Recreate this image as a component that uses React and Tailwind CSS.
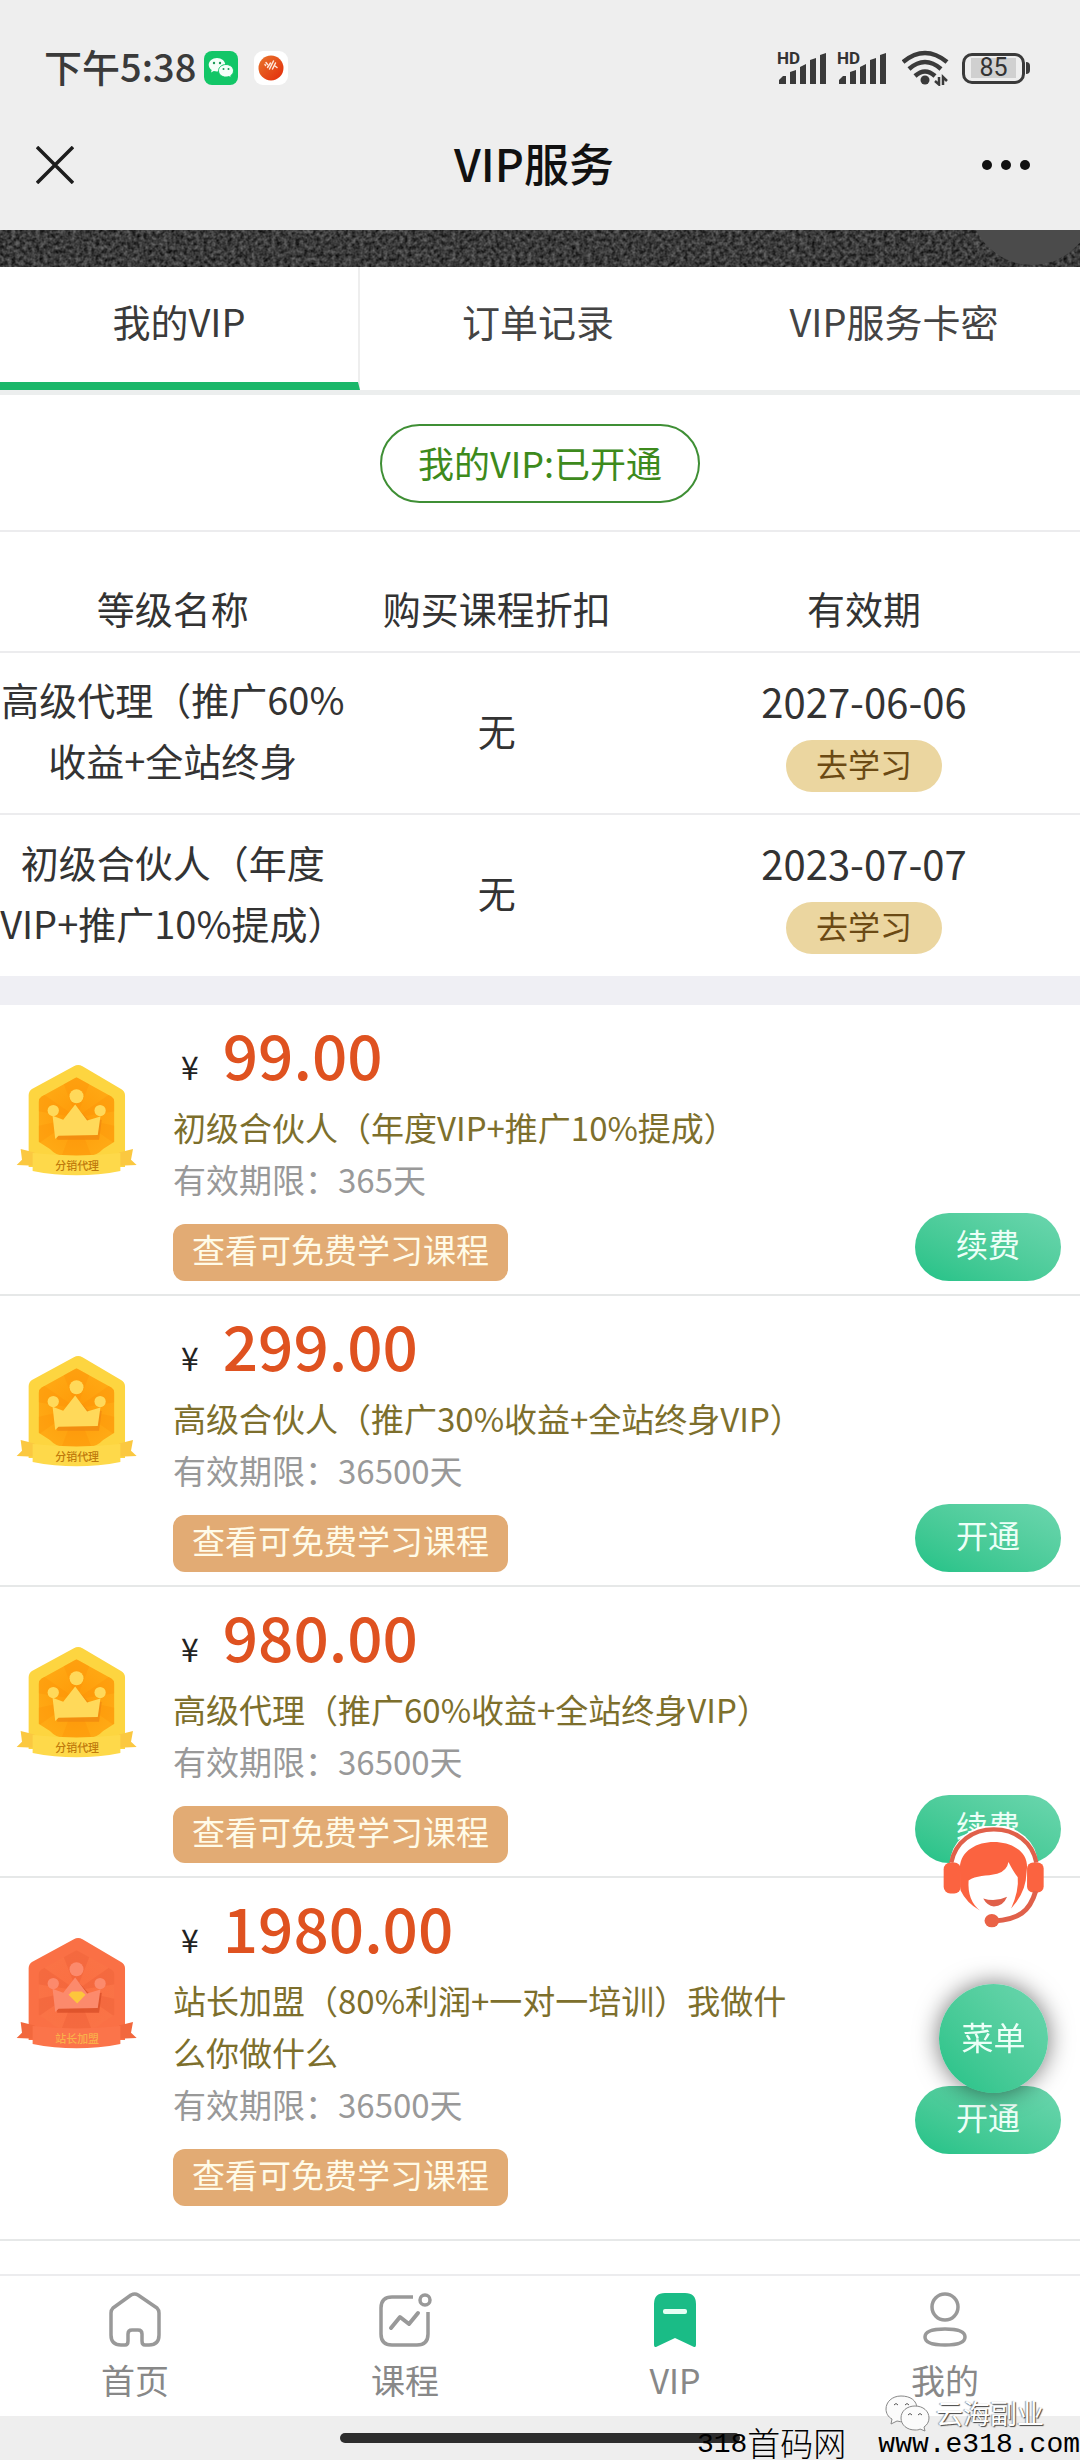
import React from "react";

const plans = [
  { price: "99.00", name: "初级合伙人（年度VIP+推广10%提成）", days: "365天", action: "续费", badge: "gold" },
  { price: "299.00", name: "高级合伙人（推广30%收益+全站终身VIP）", days: "36500天", action: "开通", badge: "gold" },
  { price: "980.00", name: "高级代理（推广60%收益+全站终身VIP）", days: "36500天", action: "续费", badge: "gold" },
  { price: "1980.00", name: "站长加盟（80%利润+一对一培训）我做什么你做什么", days: "36500天", action: "开通", badge: "red" },
];

const memberships = [
  { name: "高级代理（推广60%收益+全站终身", discount: "无", date: "2027-06-06" },
  { name: "初级合伙人（年度VIP+推广10%提成）", discount: "无", date: "2023-07-07" },
];

function WeChatIcon() {
  return (
    <svg viewBox="0 0 34 34" className="h-[34px] w-[34px]" aria-label="微信">
      <rect width="34" height="34" rx="8" fill="#12c667" />
      <path d="M13 7c-4.600 0-8.300 3-8.300 6.800 0 2.100 1.200 4 3 5.300l-.7 2.400 2.800-1.400c1 .3 2.100.4 3.200.4 4.600 0 8.300-3 8.300-6.700S17.600 7 13 7z" fill="#f4fff9" />
      <path d="M22 13.500c-4.200 0-7.500 2.800-7.500 6.300s3.300 6.300 7.500 6.300c1 0 2-.2 2.900-.5l2.500 1.300-.7-2.200c1.700-1.100 2.800-2.900 2.800-4.900 0-3.500-3.300-6.300-7.500-6.300z" fill="#f4fff9" stroke="#12c667" strokeWidth="1" />
      <g fill="#1a9a58">
        <circle cx="10" cy="12" r="1.200" />
        <circle cx="16" cy="12" r="1.200" />
        <circle cx="19.500" cy="18" r="1" />
        <circle cx="24.500" cy="18" r="1" />
      </g>
    </svg>
  );
}

function RedAppIcon() {
  return (
    <svg viewBox="0 0 34 34" className="h-[34px] w-[34px]" aria-hidden="true">
      <defs>
        <linearGradient id="ball" x1="0" y1="0" x2="1" y2="1">
          <stop offset="0" stopColor="#e8762c" />
          <stop offset="1" stopColor="#e32a0a" />
        </linearGradient>
      </defs>
      <rect width="34" height="34" rx="9" fill="#fff" />
      <circle cx="17" cy="17" r="12.500" fill="url(#ball)" />
      <g stroke="#ffe6d8" strokeWidth="1.500" strokeLinecap="round">
        <path d="M12 11.500l1.500 2M13.500 16.500l3-4.500M15.500 18l4-8M18.500 18l3-6M21 15l2 1.500M11 13.500l.5 1" />
      </g>
    </svg>
  );
}

function SignalIcon() {
  return (
    <svg viewBox="0 0 52 36" className="h-9 w-[52px] overflow-visible" aria-label="信号">
      <text x="-1" y="14" fontSize="17" fontWeight="700" fill="#333" fontFamily="Roboto, sans-serif">HD</text>
      <g fill="#3a3a3a">
        <path d="M1 34v-4l4-4 3 0v8z" />
        <path d="M12 34V22l6-2v14z" />
        <path d="M22 34V17l6-3v20z" />
        <path d="M32 34V10l6-2v26z" />
        <path d="M42 34V5l6-2v31z" />
      </g>
    </svg>
  );
}

function WifiIcon() {
  return (
    <svg viewBox="0 0 48 36" className="h-9 w-12" aria-label="无线网络">
      <g fill="none" stroke="#3a3a3a" strokeWidth="4.500">
        <path d="M1 12Q23-6 45 12" />
        <path d="M7 19Q23 5 39 19" />
        <path d="M13 26Q23 17 33 26" />
      </g>
      <circle cx="23" cy="30" r="4.500" fill="#3a3a3a" />
      <path d="M33 31l4 3.500V27M41 35v-8l4 4" fill="none" stroke="#3a3a3a" strokeWidth="2.500" />
    </svg>
  );
}

function Badge({ kind }) {
  const gold = kind === "gold";
  const id = gold ? "gold" : "red";
  const rim = gold ? "#fdd540" : "#fa7045";
  const crown = gold ? "#ffd95a" : "#fc8a6c";
  const shade = gold ? "#f08a10" : "#d94f28";
  return (
    <svg viewBox="45 40 370 340" className="h-[113px] w-[123px]" role="img" aria-label={gold ? "分销代理" : "站长加盟"}>
      <defs>
        <radialGradient id={id}>
          <stop offset="0" stopColor={gold ? "#ff9a08" : "#fb6f42"} />
          <stop offset="1" stopColor={gold ? "#ffa914" : "#fa7346"} />
        </radialGradient>
        <clipPath id={id + "clip"}>
          <path d="M230 80L335 138Q344 144 344 154V274L310 296Q290 318 262 318H198Q170 318 150 296L116 274V154Q116 144 125 138Z" />
        </clipPath>
      </defs>
      <path d="M86 134Q86 122 96 115L222 47Q235 39 248 47L364 115Q376 122 376 134V350H86Z" fill={rim} />
      <path d="M62 296L104 306V346L50 344L66 328ZM400 296L358 306V346L411 344L394 328Z" fill={gold ? "#fbc840" : "#f2683d"} />
      <g clipPath={`url(#${id}clip)`}>
        <rect x="110" y="75" width="240" height="250" fill={`url(#${id})`} />
        <g fill={gold ? "#fb8f06" : "#ee5f38"} opacity={gold ? ".3" : ".45"}>
          <path d="M230 200L180 70H280ZM230 200L360 110V180ZM230 200L360 230V290ZM230 200L280 330H180ZM230 200L100 290V230ZM230 200L100 180V110Z" />
        </g>
      </g>
      <path d="M166 205L194 212L236 176L270 212L306 208L298 268H172Z" fill={shade} opacity=".8" />
      <path d="M158 196L190 208L226 162L262 210L302 198L294 254L176 256L166 266Z" fill={crown} />
      <circle cx="230" cy="137" r="21" fill={crown} />
      <circle cx="160" cy="180" r="17" fill={crown} />
      <circle cx="301" cy="180" r="17" fill={crown} />
      {!gold && <path d="M206 214L216 204H246L257 214L232 240Z" fill="#fdc63c" />}
      <path d="M98 308Q230 322 362 308V362Q230 388 98 362Z" fill={gold ? "#fed94a" : "#fb744a"} />
      <text x="232" y="359" textAnchor="middle" fontSize="33" fontWeight="500" fill={gold ? "#c07a0c" : "#f9b04a"}>
        {gold ? "分销代理" : "站长加盟"}
      </text>
    </svg>
  );
}

function ServiceIcon() {
  return (
    <svg viewBox="66 76 310 310" className="h-[103px] w-[103px]" aria-hidden="true">
      <path d="M90 190A132 118 0 0 1 354 190L350 250Q330 330 240 362H200L120 290Z" fill="#fff" />
      <path d="M94 186C106 124 158 86 222 86S338 124 350 186" fill="none" stroke="#e0604a" strokeWidth="13" />
      <path d="M120 200C122 150 172 124 222 124S324 150 322 200L318 240Q310 285 274 324Q298 270 294 230Q282 215 266 184Q262 210 232 220C200 228 168 224 146 240Q142 300 180 330Q140 308 122 270Z" fill="#fb6340" />
      <rect x="71" y="186" width="52" height="93" rx="20" fill="#fb6340" />
      <rect x="322" y="186" width="50" height="90" rx="18" fill="#fb6340" />
      <path d="M190 294Q226 306 262 289Q250 318 222 318Q202 316 190 294Z" fill="#e0604a" />
      <path d="M348 272C330 334 296 358 222 362" fill="none" stroke="#e0604a" strokeWidth="15" />
      <ellipse cx="216" cy="361" rx="22" ry="20" fill="#ea6246" />
    </svg>
  );
}

function HomeIcon() {
  return (
    <svg viewBox="0 0 56 56" className="h-14 w-14" fill="none" stroke="#999" strokeWidth="3.500" strokeLinejoin="round" aria-hidden="true">
      <path d="M4 21Q4 18 6 16L24 3Q28 1 31 3L50 16Q52 18 52 21V43Q52 53 42 53H38Q35 53 35 49V42Q35 38 31 38H25Q21 38 21 42V49Q21 53 18 53H14Q4 53 4 43Z" />
    </svg>
  );
}

function CourseIcon() {
  return (
    <svg viewBox="0 0 56 56" className="h-14 w-14" fill="none" stroke="#999" strokeWidth="3.500" aria-hidden="true">
      <path d="M36 5H15Q4 5 4 16V42Q4 53 15 53H40Q51 53 51 42V20" />
      <circle cx="48" cy="8" r="5" />
      <path d="M14 36L23 25L32 32L41 21" strokeWidth="4" strokeLinecap="round" strokeLinejoin="round" />
    </svg>
  );
}

function VipIcon() {
  return (
    <svg viewBox="0 0 56 56" className="h-14 w-14" aria-hidden="true">
      <path d="M7 12Q7 1 18 1H38Q49 1 49 12V53Q49 56 46 54.500L28 46L10 54.500Q7 56 7 53Z" fill="#1abc86" />
      <rect x="16" y="17" width="24" height="5" rx="2" fill="#e6fff5" />
    </svg>
  );
}

function MineIcon() {
  return (
    <svg viewBox="0 0 56 56" className="h-14 w-14" fill="none" stroke="#999" strokeWidth="3.500" aria-hidden="true">
      <circle cx="28" cy="15" r="13" />
      <path d="M8 45C8 40 14 37 28 37S48 40 48 45S42 53 28 53S8 50 8 45Z" />
    </svg>
  );
}

const navItems = [
  { label: "首页", Icon: HomeIcon },
  { label: "课程", Icon: CourseIcon },
  { label: "VIP", Icon: VipIcon },
  { label: "我的", Icon: MineIcon },
];

function StatusBar() {
  return (
    <div className="flex h-[100px] items-center justify-between pt-9 pr-[50px] pl-[44px]">
      <div className="flex items-center">
        <span className="pb-1 text-[38px] leading-[52px] font-medium text-[#3a3a3a]">下午5:38</span>
        <span className="ml-2 flex gap-4">
          <WeChatIcon />
          <RedAppIcon />
        </span>
      </div>
      <div className="flex items-center">
        <span className="flex gap-2">
          <SignalIcon />
          <SignalIcon />
        </span>
        <span className="mr-3 ml-3">
          <WifiIcon />
        </span>
        <span className="flex h-[31px] w-[63px] items-center justify-center rounded-[10px] border-3 border-[#3a3a3a]">
          <span className="bg-[#d0d0d0] px-2 font-[Roboto] text-[25px] leading-[20px] text-[#333]">85</span>
        </span>
        <span className="ml-px h-3 w-1 rounded-r bg-[#3a3a3a]" />
      </div>
    </div>
  );
}

function TitleBar() {
  return (
    <div className="flex h-[130px] items-center justify-between px-9">
      <button type="button" aria-label="关闭" className="w-[60px]">
        <svg viewBox="0 0 38 38" className="h-[38px] w-[38px]" stroke="#1d1d1d" strokeWidth="3.500">
          <path d="M1 1L37 37M37 1L1 37" />
        </svg>
      </button>
      <h1 className="pr-3 pb-1 text-[45px] font-medium text-[#111]">VIP服务</h1>
      <button type="button" aria-label="更多" className="flex w-[60px] items-center justify-end gap-[9px] pr-3.5">
        <span className="h-2.5 w-2.5 shrink-0 rounded-full bg-[#111]" />
        <span className="h-2.5 w-2.5 shrink-0 rounded-full bg-[#111]" />
        <span className="h-2.5 w-2.5 shrink-0 rounded-full bg-[#111]" />
      </button>
    </div>
  );
}

function Banner() {
  return (
    <div className="relative h-[37px] overflow-hidden bg-[#2e2e2e]">
      <svg className="h-full w-full" aria-hidden="true">
        <filter id="grain" x="0" y="0" width="100%" height="100%" colorInterpolationFilters="sRGB">
          <feTurbulence type="fractalNoise" baseFrequency="0.25" numOctaves="3" seed="4" />
          <feColorMatrix values="0.5 0 0 0 -0.02  0.5 0 0 0 -0.02  0.5 0 0 0 -0.02  0 0 0 0 1" />
        </filter>
        <rect width="100%" height="100%" filter="url(#grain)" />
      </svg>
      <div className="absolute -right-3.5 bottom-0.5 h-[124px] w-[124px] rounded-full bg-[#4b4b4b]" />
    </div>
  );
}

function Tabs() {
  return (
    <div role="tablist" className="grid grid-cols-3 border-b-[5px] border-[#eceeee] text-[38px] leading-[56px] text-[#444]">
      <button type="button" role="tab" aria-selected="true" className="-mb-px h-[123px] border-r-2 border-b-8 border-[#eee] border-b-[#1bb76a] pb-2 text-[#3a3a3a]">
        我的VIP
      </button>
      <button type="button" role="tab" aria-selected="false" className="h-[123px] pr-1 pb-4">订单记录</button>
      <button type="button" role="tab" aria-selected="false" className="h-[123px] pr-6 pb-4 pl-3">VIP服务卡密</button>
    </div>
  );
}

function MembershipTable() {
  return (
    <table className="w-full table-fixed text-center text-[38px] text-[#333]">
      <colgroup>
        <col className="w-[32%]" />
        <col className="w-[28%]" />
        <col className="w-[40%]" />
      </colgroup>
      <thead>
        <tr className="h-[121px] border-t-2 border-[#ececee]">
          <th className="pt-8 leading-[56px] font-normal">等级名称</th>
          <th className="pt-8 leading-[56px] font-normal">购买课程折扣</th>
          <th className="pt-8 leading-[56px] font-normal">有效期</th>
        </tr>
      </thead>
      <tbody>
        {memberships.map((m) => (
          <tr key={m.date} className="h-[162px] border-t-2 border-[#ececee]">
            <td className="pb-2 leading-[61px]">{m.name}</td>
            <td className="pb-2 leading-[61px]">{m.discount}</td>
            <td>
              <div className="pb-2 text-[40px] leading-[53px]">{m.date}</div>
              <button type="button" className="mx-auto mt-1 block h-[52px] w-[156px] rounded-full bg-[#ebd6a0] pb-1.5 text-[32px] leading-[46px] text-[#6b4a14]">
                去学习
              </button>
            </td>
          </tr>
        ))}
      </tbody>
    </table>
  );
}

function Plan({ plan }) {
  return (
    <li className="flex items-start border-b-2 border-[#e6e8e8] pr-[19px] pb-[13px] pl-[15px] last:pb-[33px]">
      <div className="mt-[59px] w-[158px] shrink-0">
        <Badge kind={plan.badge} />
      </div>
      <div className="min-w-0 flex-1 pr-[108px]">
        <p className="flex items-baseline gap-6 pl-2 text-[#222]">
          <span className="text-[32px] leading-[40px]">¥</span>
          <span className="text-[62px] leading-[96px] font-medium text-[#df5220]">{plan.price}</span>
        </p>
        <h2 className="text-[33px] leading-[52px] text-[#7d6f2c]">{plan.name}</h2>
        <p className="text-[33px] leading-[52px] text-[#999]">有效期限：{plan.days}</p>
        <button type="button" className="mt-[19px] block h-[57px] rounded-xl bg-[#e2ab74] px-[19px] pb-1.5 text-[33px] leading-[51px] text-[#fffbe8]">
          查看可免费学习课程
        </button>
      </div>
      <button type="button" className="mt-[208px] h-[68px] w-[146px] shrink-0 rounded-full bg-linear-to-tr from-[#20c287] to-[#6bd6ae] pb-2 text-[32px] leading-[60px] text-[#ecfff7]">
        {plan.action}
      </button>
    </li>
  );
}

function FloatingActions() {
  return (
    <div className="fixed right-8 bottom-[367px] flex flex-col items-center gap-[55px]">
      <button type="button" aria-label="在线客服">
        <ServiceIcon />
      </button>
      <button type="button" className="h-[109px] w-[109px] rounded-full bg-linear-to-tr from-[#20c287] to-[#6bd6ae] pb-1.5 text-[32px] text-[#ecfff7] shadow-[0_0_24px_rgba(0,0,0,0.55)]">
        菜单
      </button>
    </div>
  );
}

function BottomNav() {
  return (
    <nav className="grid h-[142px] grid-cols-4 border-t-2 border-[#ececee] bg-white">
      {navItems.map(({ label, Icon }) => (
        <a key={label} href="#" className="flex flex-col items-center pt-4 text-[34px] leading-[52px] text-[#888]">
          <Icon />
          <span className="mt-1.5">{label}</span>
        </a>
      ))}
    </nav>
  );
}

function Watermark() {
  return (
    <div className="pointer-events-none absolute right-0 bottom-0 flex flex-col items-end">
      <div className="mr-9 -mb-2 flex items-center gap-1.5">
        <svg viewBox="0 0 46 38" className="h-[38px] w-[46px]" fill="#fbfbfb" stroke="#888" strokeWidth="1" aria-hidden="true">
          <path d="M17 2C8 2 2 8 2 15c0 4 2 8 6 10l-1 5 6-3c10 3 20-3 20-12S26 2 17 2z" />
          <path d="M31 12c-8 0-14 5-14 12s6 12 14 12c2 0 4 0 5-1l5 2-1-4c3-2 5-5 5-9 0-7-6-12-14-12z" />
          <path d="M10 11q2-3 4 0M21 11q2-3 4 0M24 21q2-3 4 0M34 21q2-3 4 0" fill="none" stroke="#555" />
        </svg>
        <span className="text-[27px] leading-[38px] text-white [text-shadow:1px_1px_1px_#444,-1px_0_1px_#999]">云海副业</span>
      </div>
      <div className="flex items-end gap-8 font-['Liberation_Mono','Noto_Sans_CJK_SC',monospace] text-[28px] leading-[30px] text-black">
        <span className="flex items-end">
          318<span className="font-['Noto_Sans_CJK_SC',sans-serif] text-[33px] leading-[36px] font-light">首码网</span>
        </span>
        <span>www.e318.com</span>
      </div>
    </div>
  );
}

export default function App() {
  return (
    <div className="relative flex min-h-screen flex-col bg-[#eeeeee] font-['Noto_Sans_CJK_SC',sans-serif]">
      <header>
        <StatusBar />
        <TitleBar />
        <Banner />
      </header>
      <main className="grow bg-white">
        <Tabs />
        <div className="flex justify-center pt-[29px] pb-[27px]">
          <button type="button" className="h-[79px] rounded-full border-2 border-[#3f8f35] px-9 pb-1 text-[36px] leading-[70px] text-[#3d8a1c]">
            我的VIP:已开通
          </button>
        </div>
        <MembershipTable />
        <ul className="border-t-[29px] border-[#efeff4]">
          {plans.map((p) => (
            <Plan key={p.price} plan={p} />
          ))}
        </ul>
      </main>
      <BottomNav />
      <div className="flex h-[44px] justify-center pt-[17px]">
        <div className="h-2.5 w-[37%] rounded-full bg-[#2d2d2d]" />
      </div>
      <FloatingActions />
      <Watermark />
    </div>
  );
}
